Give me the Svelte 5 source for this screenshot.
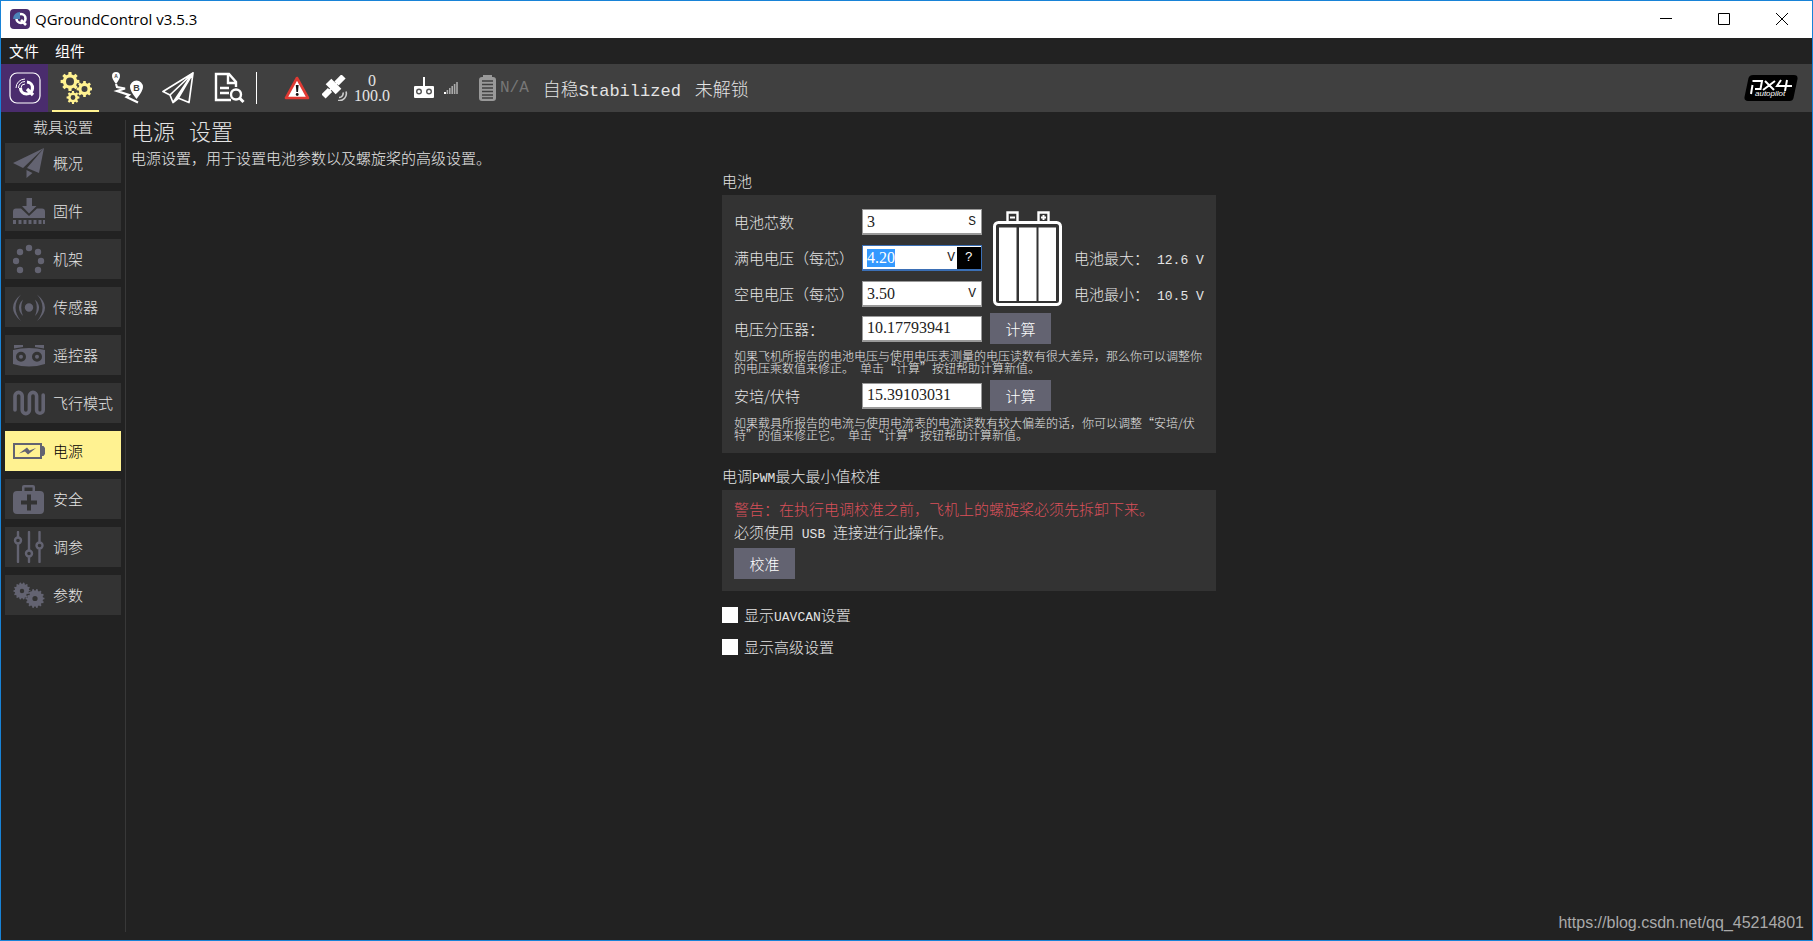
<script lang="ts">
    import { onMount } from 'svelte';

    let cells = '3';
    let fullVoltage = '4.20';
    let emptyVoltage = '3.50';
    let divider = '10.17793941';
    let ampsPerVolt = '15.39103031';
    let showUavcan = false;
    let showAdvanced = false;
    let selected = '电源';

    let fullVoltageEl: HTMLInputElement;

    onMount(() => {
        fullVoltageEl.focus();
        fullVoltageEl.select();
    });

    function circle(cx: number, cy: number, r: number) {
        return `M${cx - r} ${cy}a${r} ${r} 0 1 0 ${2 * r} 0a${r} ${r} 0 1 0 ${-2 * r} 0z`;
    }

    // cog outline with a round hole, meant for fill-rule evenodd
    function gear(cx: number, cy: number, r: number, hole: number, teeth: number, depth = 0.24) {
        const inner = r * (1 - depth);
        const step = (Math.PI * 2) / teeth;
        const points: string[] = [];
        for (let i = 0; i < teeth; i++) {
            const corners = [
                [inner, -0.3],
                [r, -0.2],
                [r, 0.2],
                [inner, 0.3]
            ];
            for (const [radius, offset] of corners) {
                const a = (i + offset) * step;
                points.push(`${(cx + radius * Math.cos(a)).toFixed(2)} ${(cy + radius * Math.sin(a)).toFixed(2)}`);
            }
        }
        return `M${points.join('L')}z${circle(cx, cy, hole)}`;
    }

    const frameDots = [[16, 5], [7, 9], [25, 9], [3, 18], [28, 18], [7, 27], [25, 27]];

    const sections = [
        { name: '概况', fill: 'M31 1L0 16l10 5zM31 1L14 21l12 5zM13.500 23v8l6-5z', line: '', width: 0 },
        {
            name: '固件',
            fill:
                'M13.500 3h5.500v8h4.500L16 18.500 9 11h4.500zM3 13.500h5l8 7.500 8-7.500h5q3 0 3 3v6.500H0v-6.500q0-3 3-3z' +
                'M0 25h3v4H0zM5.500 25h3v4h-3zM10.500 25h3v4h-3zM15.500 25h3v4h-3zM20.500 25h3v4h-3zM25.500 25h3v4h-3zM30 25h2v4h-2z',
            line: '',
            width: 0
        },
        { name: '机架', fill: frameDots.map(([x, y]) => circle(x, y, 3.2)).join(''), line: '', width: 0 },
        {
            name: '传感器',
            fill:
                circle(16, 16.5, 4.2) +
                'M10 8.500Q2 16.500 10 25 6.500 16.500 10 8.500zM22 8.500q8 8 0 16.500 3.500-8.500 0-16.500z' +
                'M8 3.500Q-8 16.500 8 30-3 16.500 8 3.500zM24 3.500Q40 16.500 24 30 35 16.500 24 3.500z',
            line: '',
            width: 0
        },
        {
            name: '遥控器',
            fill:
                'M1 6h9v2L1 9.500zM22 6h9v3.500L22 8zM0 11q16-4 32 0v14q-16 5-32 0z' +
                circle(8, 17.7, 5) + circle(24, 17.7, 5) + circle(8, 17.7, 2) + circle(24, 17.7, 2),
            line: '',
            width: 0
        },
        {
            name: '飞行模式',
            fill: '',
            line: 'M2 23V9a3.600 3.600 0 0 1 7.200 0v14a3.600 3.600 0 0 0 7.200 0V9a3.600 3.600 0 0 1 7.200 0v14a3.300 3.300 0 0 0 6.600 0V8',
            width: 3.6
        },
        {
            name: '电源',
            fill: 'M0 8h29v3h1.500l1.500 2v6l-1.500 2H29v3H0zM2 10v12h25V10zM6 18.500l8-6 2.500 3 6.500-2.500-8 6.500-3-3z',
            line: '',
            width: 0
        },
        {
            name: '安全',
            fill:
                'M4 8h5V4q0-2 2-2h9q2 0 2 2v4h5q4 0 4 4v15q0 4-4 4H4q-4 0-4-4V12q0-4 4-4zM11.500 4.500V8h8V4.500z' +
                'M14 11.500v6H8v4h6v6h4v-6h6v-4h-6v-6z',
            line: '',
            width: 0
        },
        {
            name: '调参',
            fill: '',
            line:
                'M5 1v5M5 13v18M16 1v18M16 26v5M26.500 1v10.500M26.500 18v13' +
                circle(5, 9.5, 3) + circle(16, 22.5, 3) + circle(26.5, 14.5, 3),
            width: 2.4
        },
        { name: '参数', fill: gear(9, 12, 8.5, 2.2, 14, 0.15) + gear(22, 19.5, 9.5, 2.6, 14, 0.15), line: '', width: 0 }
    ];
</script>

<div class="window">
    <header class="titlebar">
        <svg class="app-icon" viewBox="0 0 20 20">
            <rect width="20" height="20" rx="4" fill="#4a2c6d" />
            <circle cx="11" cy="9.500" r="4.500" fill="none" stroke="#fff" stroke-width="2.600" />
            <path d="M11 11l5 5" stroke="#fff" stroke-width="2.600" />
            <path d="M3 10a7 7 0 0 1 7-7v7z" fill="#4c84b8" />
        </svg>
        <h1>QGroundControl v3.5.3</h1>
        <div class="window-buttons">
            <button aria-label="最小化"><svg viewBox="0 0 12 12"><path d="M0 5.500h12" /></svg></button>
            <button aria-label="最大化"><svg viewBox="0 0 12 12"><path d="M.5.5h11v11H.5z" /></svg></button>
            <button aria-label="关闭"><svg viewBox="0 0 12 12"><path d="M0 0l12 12M12 0L0 12" /></svg></button>
        </div>
    </header>

    <nav class="menubar">
        <button>文件</button>
        <button>组件</button>
    </nav>

    <div class="toolbar">
        <button class="tool brand" aria-label="QGroundControl">
            <svg viewBox="0 0 32 32" fill="none" stroke="#fff">
                <rect x="1" y="1" width="30" height="30" rx="7" stroke-width="1.200" />
                <path d="M18 10a6 6 0 1 1-6.500 6" stroke-width="3.200" />
                <path d="M18 17l6 6" stroke-width="3.200" />
                <path d="M7 16a9 9 0 0 1 9-9M9.500 16a6.500 6.500 0 0 1 6.500-6.500M12 16a4 4 0 0 1 4-4" stroke-width="1" />
            </svg>
        </button>
        <button class="tool active" aria-label="载具设置">
            <svg viewBox="0 0 32 32" fill="#fff291" fill-rule="evenodd">
                <path d={gear(10, 9.5, 9.5, 4, 8)} />
                <path d={gear(24.5, 17, 8, 3, 8)} />
                <path d={gear(13, 25.5, 6.5, 2.4, 8)} />
            </svg>
        </button>
        <button class="tool" aria-label="计划">
            <svg viewBox="0 0 32 32" fill="#fff">
                <path d="M5 0a4 4 0 0 1 4 4q0 3-4 8-4-5-4-8a4 4 0 0 1 4-4zM25.500 8.500a6.500 6.500 0 0 1 6.500 6.500q0 4-6.500 12-6.500-8-6.500-12a6.500 6.500 0 0 1 6.500-6.500z" />
                <path d="M5 12l1 3 8 1.500-8 2.500 12 4-2.500 2L27 30.500" fill="none" stroke="#fff" stroke-width="2.200" />
                <text x="5" y="6" font-size="5">A</text>
                <text x="25.500" y="18.500" font-size="9">B</text>
            </svg>
        </button>
        <button class="tool" aria-label="飞行">
            <svg viewBox="0 0 32 32" fill="none" stroke="#fff" stroke-width="1.700" stroke-linejoin="round">
                <path d="M31 1L1 19.500l7 3.500zM31 1L8 23l3 7.500zM31 1L11 30.500l5-4zM31 1L16 26l11 4.500z" />
            </svg>
        </button>
        <button class="tool" aria-label="分析">
            <svg viewBox="0 0 32 32" fill="none" stroke="#fff" stroke-width="2.400">
                <path d="M18 28H3V2h13l7 8v5M15 2v9h8M7 16h9M7 21h9" />
                <circle cx="23" cy="22.500" r="5" />
                <path d="M26.500 26l4 4" stroke-width="3" />
            </svg>
        </button>

        <span class="separator"></span>

        <button class="indicator" aria-label="警告">
            <svg width="26" height="24" viewBox="0 0 26 24">
                <path d="M13 2L24 22H2z" fill="#fff" stroke="#e03a33" stroke-width="2.600" stroke-linejoin="round" />
                <path d="M11.800 9h2.800l-.6 7h-1.600z" fill="#111" />
                <circle cx="13.200" cy="18.500" r="1.400" fill="#111" />
            </svg>
        </button>
        <div class="indicator gps">
            <svg width="26" height="26" viewBox="0 0 26 26" fill="none" stroke="#fff">
                <path d="M1.500 21.500l6.500-6.500M14.500 8.500l7-7" stroke-width="6" />
                <path d="M5 18L18 5" stroke-width="2" />
                <path d="M6.500 6.500l10 10" stroke-width="8" />
                <path d="M17 22.500a4 4 0 0 0 4-5M16 25.500a7 7 0 0 0 8-9" stroke-width="1.600" stroke="#ccc" />
            </svg>
            <div class="gps-text"><span>0</span><span>100.0</span></div>
        </div>
        <div class="indicator rc">
            <svg width="20" height="24" viewBox="0 0 20 24">
                <path d="M9 1h2v9h8q1 0 1 1v10q0 1-1 1H1q-1 0-1-1V11q0-1 1-1h8z" fill="#fff" />
                <g fill="none" stroke="#555" stroke-width="1.400">
                    <circle cx="5" cy="15.500" r="2.300" />
                    <circle cx="15" cy="15.500" r="2.300" />
                </g>
            </svg>
            <svg width="14" height="14" viewBox="0 0 14 14">
                <path d="M0 11h2v2H0z" fill="#fff" />
                <path d="M2.600 9h1.600v4H2.600zM5 7h1.600v6H5zM7.400 5H9v8H7.400zM9.800 3h1.600v10H9.800zM12.200 1h1.600v12h-1.600z" fill="#aaa" />
            </svg>
        </div>
        <div class="indicator battery">
            <svg width="17" height="26" viewBox="0 0 17 26">
                <path d="M4 0h9v2h1q3 0 3 3v18q0 3-3 3H3q-3 0-3-3V5q0-3 3-3h1z" fill="#999" />
                <path d="M3 6h11M3 9.500h11M3 13h11M3 16.500h11M3 20h11M3 23h11" stroke="#404040" stroke-width="1.300" />
            </svg>
            <span>N/A</span>
        </div>
        <button class="mode">自稳<span class="wide-latin">Stabilized</span></button>
        <button class="mode">未解锁</button>

        <svg class="px4" width="54" height="26" viewBox="0 0 54 26">
            <path d="M9 0h41q4 0 3.500 4l-4 19q-.6 3-4 3H4q-4 0-3.500-4l4-19Q5.500 0 9 0z" fill="#000" />
            <path d="M7 19l1.500-9M8.500 6h9.500l-1.500 8H11M21 6l9 9M31 6L19 15M37 5l-4 6h15M43 5l-2 11" fill="none" stroke="#fff" stroke-width="2" />
            <text x="11" y="21">autopilot</text>
        </svg>
    </div>

    <div class="body">
        <nav class="sidebar">
            <h2>载具设置</h2>
            {#each sections as section}
                <button class:selected={selected === section.name} on:click={() => (selected = section.name)}>
                    <svg viewBox="0 0 32 32">
                        {#if section.fill}
                            <path d={section.fill} fill="#636371" fill-rule="evenodd" />
                        {/if}
                        {#if section.line}
                            <path d={section.line} fill="none" stroke="#636371" stroke-width={section.width} stroke-linecap="round" />
                        {/if}
                    </svg>
                    {section.name}
                </button>
            {/each}
        </nav>

        <main>
            <h2 class="page-title"><span>电源</span><span>设置</span></h2>
            <p class="description">电源设置，用于设置电池参数以及螺旋桨的高级设置。</p>

            <div class="column">
                <h3>电池</h3>
                <section class="panel power">
                    <div class="cells">
                        <label for="cells">电池芯数</label>
                        <div class="field"><input id="cells" bind:value={cells} /><span>S</span></div>

                        <label for="full">满电电压（每芯）</label>
                        <div class="field focused">
                            <input id="full" bind:value={fullVoltage} bind:this={fullVoltageEl} />
                            <span>V</span>
                            <button aria-label="帮助">?</button>
                        </div>

                        <label for="empty">空电电压（每芯）</label>
                        <div class="field"><input id="empty" bind:value={emptyVoltage} /><span>V</span></div>

                        <svg class="pack" viewBox="0 0 70 96" fill="none" stroke="#fff">
                            <path d="M14.500 12V2.500h10V12M45.500 12V2.500h10V12" stroke-width="2.400" />
                            <path d="M17 7.500h5M48 7.500h5M50.500 5v5" stroke-width="2" />
                            <rect x="1.500" y="12.500" width="66" height="82" rx="4" stroke-width="3" />
                            <path d="M6 17.500h17.500v73.500H6zM26 17.500h17.500v73.500H26zM45.500 17.500H63v73.500H45.500z" fill="#fff" stroke="none" />
                        </svg>
                        <p class="reading max">电池最大：<span>12.6 V</span></p>
                        <p class="reading min">电池最小：<span>10.5 V</span></p>
                    </div>

                    <div class="row">
                        <label for="divider">电压分压器：</label>
                        <div class="field"><input id="divider" bind:value={divider} /></div>
                        <button class="action">计算</button>
                    </div>
                    <p class="help">
                        如果飞机所报告的电池电压与使用电压表测量的电压读数有很大差异，那么你可以调整你的电压乘数值来修正。&ensp;单击“计算”按钮帮助计算新值。
                    </p>
                    <div class="row">
                        <label for="amps">安培/伏特</label>
                        <div class="field"><input id="amps" bind:value={ampsPerVolt} /></div>
                        <button class="action">计算</button>
                    </div>
                    <p class="help">
                        如果载具所报告的电流与使用电流表的电流读数有较大偏差的话，你可以调整“安培/伏特”的值来修正它。&ensp;单击“计算”按钮帮助计算新值。
                    </p>
                </section>

                <h3>电调<span class="latin">PWM</span>最大最小值校准</h3>
                <section class="panel esc">
                    <p class="warning">警告：在执行电调校准之前，飞机上的螺旋桨必须先拆卸下来。</p>
                    <p>必须使用<span class="latin">&nbsp;USB&nbsp;</span>连接进行此操作。</p>
                    <button class="action">校准</button>
                </section>

                <label class="check">
                    <input type="checkbox" bind:checked={showUavcan} />
                    <span>显示<span class="latin">UAVCAN</span>设置</span>
                </label>
                <label class="check">
                    <input type="checkbox" bind:checked={showAdvanced} />
                    <span>显示高级设置</span>
                </label>
            </div>
        </main>
    </div>

    <a class="watermark" href="https://blog.csdn.net/qq_45214801">https://blog.csdn.net/qq_45214801</a>
</div>

<style>
    :global(body) {
        margin: 0;
        background: #222;
    }
    .window {
        position: relative;
        box-sizing: border-box;
        display: flex;
        flex-direction: column;
        min-height: 100vh;
        border: 1px solid #1883d7;
        background: #222;
        color: #e4e4e4;
        font: 300 15px/20px 'Noto Sans CJK SC', sans-serif;
    }
    h1,
    h2,
    h3,
    p {
        margin: 0;
        font-weight: inherit;
        font-size: inherit;
    }
    button {
        margin: 0;
        padding: 0;
        border: 0;
        background: none;
        color: inherit;
        font: inherit;
    }
    svg {
        display: block;
        flex: none;
    }
    .latin {
        font: 13px/1 'Liberation Mono', monospace;
    }
    .wide-latin {
        font: 17px/1 'Liberation Mono', monospace;
    }

    /* title and menu */
    .titlebar {
        box-sizing: border-box;
        display: flex;
        align-items: center;
        height: 37px;
        padding: 0 1px 2px 9px;
        background: #fff;
        color: #000;
    }
    .app-icon {
        width: 20px;
        height: 20px;
    }
    h1 {
        margin-left: 5px;
        font: 15px/20px 'Open Sans', sans-serif;
    }
    .window-buttons {
        display: flex;
        margin-left: auto;
    }
    .window-buttons button {
        display: grid;
        place-items: center;
        width: 58px;
        height: 34px;
    }
    .window-buttons svg {
        width: 12px;
        height: 12px;
        fill: none;
        stroke: #000;
    }
    .menubar {
        display: flex;
        align-items: center;
        gap: 16px;
        height: 26px;
        padding-left: 8px;
        color: #fff;
        font-weight: 400;
    }

    /* toolbar */
    .toolbar {
        display: flex;
        align-items: center;
        height: 48px;
        background: #404040;
    }
    .tool {
        box-sizing: border-box;
        display: grid;
        place-items: center;
        width: 47px;
        height: 48px;
        margin-right: 4px;
        border: solid transparent;
        border-width: 2px 0;
    }
    .tool svg {
        width: 32px;
        height: 32px;
    }
    .tool text {
        fill: #404040;
        stroke: none;
        font-family: 'Liberation Sans', sans-serif;
        font-weight: 700;
        text-anchor: middle;
    }
    .brand {
        border-color: #4a2c6d;
        background: #4a2c6d;
    }
    .active {
        border-bottom-color: #fff291;
    }
    .separator {
        width: 1px;
        height: 32px;
        margin-right: 27px;
        background: #fff;
    }
    .indicator {
        display: flex;
        align-items: center;
    }
    .gps {
        gap: 5px;
        margin-left: 12px;
    }
    .gps-text {
        display: flex;
        flex-direction: column;
        align-items: center;
        width: 38px;
        font: 16px/15px 'Liberation Serif', serif;
    }
    .rc {
        gap: 10px;
        margin-left: 23px;
    }
    .battery {
        gap: 4px;
        margin-left: 21px;
        color: #777;
        font: 16px/20px 'Liberation Mono', monospace;
    }
    .mode {
        margin-left: 14px;
        font-size: 18px;
        line-height: 22px;
    }
    .px4 {
        margin-left: auto;
        margin-right: 14px;
    }
    .px4 text {
        fill: #fff;
        font: italic 8px 'Liberation Sans', sans-serif;
    }

    /* sidebar */
    .body {
        display: flex;
        flex: 1;
        padding: 8px 5px 8px 4px;
    }
    .sidebar {
        display: flex;
        flex-direction: column;
        gap: 8px;
        width: 116px;
        padding-right: 4px;
        border-right: 1px solid #383838;
    }
    .sidebar h2 {
        height: 15px;
        line-height: 14px;
        text-align: center;
    }
    .sidebar button {
        display: flex;
        align-items: center;
        gap: 8px;
        height: 40px;
        padding-left: 8px;
        background: #333;
    }
    .sidebar svg {
        width: 32px;
        height: 32px;
    }
    .sidebar .selected {
        background: #fff291;
        color: #000;
    }

    /* page */
    main {
        flex: 1;
        padding-left: 5px;
    }
    .page-title {
        display: flex;
        gap: 14px;
        font-size: 22px;
        line-height: 20px;
    }
    .description {
        margin-top: 8px;
    }
    .column {
        width: 494px;
        margin: 4px auto 0;
    }
    h3 {
        margin-bottom: 5px;
        line-height: 18px;
    }
    .panel {
        margin-bottom: 14px;
        padding: 12px;
        background: #333;
    }
    .power {
        display: flex;
        flex-direction: column;
        gap: 6px;
        padding-top: 14px;
    }
    .cells {
        display: grid;
        grid-template-columns: 128px 120px 92px auto;
        grid-template-rows: repeat(3, 26px);
        row-gap: 10px;
        align-items: center;
        white-space: nowrap;
    }
    .cells label {
        grid-column: 1;
    }
    .cells .field {
        grid-column: 2;
    }
    .pack {
        grid-column: 3;
        grid-row: 1 / 4;
        width: 70px;
        height: 96px;
        margin-left: 11px;
    }
    .reading {
        grid-column: 4;
    }
    .max {
        grid-row: 2;
    }
    .min {
        grid-row: 3;
    }
    .reading span {
        margin-left: 8px;
        font: 13px/1 'Liberation Mono', monospace;
    }
    .field {
        box-sizing: border-box;
        display: flex;
        align-items: center;
        width: 120px;
        height: 26px;
        padding: 0 5px 0 4px;
        border: 1px solid #999;
        border-bottom-width: 2px;
        background: #fff;
        color: #222;
        font: 13px/18px 'Liberation Mono', monospace;
    }
    .field input {
        flex: 1;
        min-width: 0;
        height: 18px;
        padding: 0;
        border: 0;
        outline: 0;
        background: none;
        color: inherit;
        font: 16px/18px 'Liberation Serif', serif;
    }
    .field input::selection {
        background: #39f;
        color: #fff;
    }
    .focused {
        padding-right: 0;
        border-color: #3b6fb5;
    }
    .field button {
        width: 24px;
        height: 22px;
        margin-left: 2px;
        background: #000;
        color: #fff;
    }
    .row {
        display: grid;
        grid-template-columns: 128px 128px auto;
        align-items: center;
        justify-content: start;
    }
    .action {
        width: 61px;
        height: 31px;
        background: #636371;
        color: #fff;
    }
    .help {
        font-size: 12px;
        line-height: 12px;
    }
    .esc {
        display: flex;
        flex-direction: column;
        align-items: flex-start;
        gap: 3px;
        padding-top: 9px;
    }
    .esc .action {
        margin-top: 3px;
    }
    .warning {
        color: #d9505a;
    }
    .check {
        display: flex;
        align-items: center;
        gap: 6px;
        margin-bottom: 12px;
    }
    .check input {
        appearance: none;
        width: 16px;
        height: 16px;
        margin: 0;
        background: #fff;
    }
    .check input:checked {
        box-shadow: inset 0 0 0 4px #fff;
        background: #222;
    }

    .watermark {
        position: absolute;
        right: 8px;
        bottom: 7px;
        color: #aaa;
        font: 16px/20px 'Liberation Sans', sans-serif;
        text-decoration: none;
    }
</style>
